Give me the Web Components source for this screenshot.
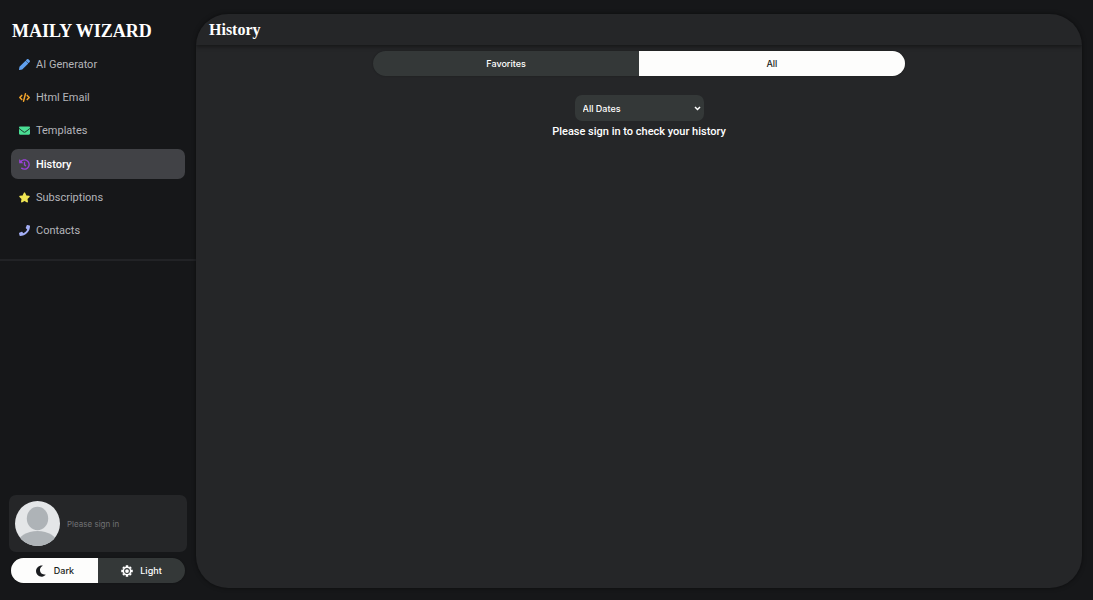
<!DOCTYPE html>
<html lang="en">
<head>
<meta charset="utf-8">
<meta name="viewport" content="width=device-width, initial-scale=1">
<title>Maily Wizard</title>
<style>
html, body { height: 100%; }
body { margin: 0; background: #161719; font-family: Inter, "Liberation Sans", sans-serif; font-size: 11px; }
</style>
</head>
<body>
<mw-app></mw-app>
<script>
const ICONS = {
  pencil: '<path d="M497.900 142.100l-46.100 46.100c-4.700 4.700-12.300 4.700-17 0l-111-111c-4.700-4.700-4.700-12.300 0-17l46.100-46.100c18.700-18.700 49.100-18.700 67.900 0l60.100 60.100c18.800 18.700 18.800 49.100 0 67.900zM306 78L21.600 362.400.4 483.900c-2.900 16.400 11.400 30.600 27.800 27.800l121.500-21.300L434 206z"/>',
  code: '<g fill="none" stroke="currentColor" stroke-width="72" stroke-linecap="round" stroke-linejoin="round"><path d="M130 160L38 256l92 96M382 160l92 96-92 96M300 85l-88 342"/></g>',
  envelope: '<path d="M502.300 190.800c3.900-3.100 9.700-.2 9.700 4.700V400c0 26.500-21.500 48-48 48H48c-26.500 0-48-21.500-48-48V195.600c0-5 5.700-7.800 9.700-4.700 22.400 17.400 52.100 39.500 154.100 113.600 21.100 15.400 56.700 47.800 92.200 47.600 35.700.3 72-32.800 92.300-47.600 102-74.100 131.600-96.300 154-113.700zM256 320c23.200.4 56.600-29.200 73.400-41.400 132.700-96.300 142.800-104.700 173.400-128.700 5.800-4.500 9.200-11.500 9.200-18.900v-19c0-26.500-21.500-48-48-48H48c-26.500 0-48 21.500-48 48v19c0 7.400 3.400 14.300 9.200 18.900 30.600 23.900 40.700 32.400 173.400 128.700 16.800 12.200 50.200 41.800 73.400 41.400z"/>',
  history: '<path d="M504 255.531c.253 136.640-111.180 248.372-247.820 248.468-59.015.042-113.223-20.530-155.822-54.911-11.077-8.940-11.905-25.541-1.839-35.607l11.267-11.267c8.609-8.609 22.353-9.551 31.891-1.984C173.062 425.135 212.781 440 256 440c101.705 0 184-82.311 184-184 0-101.705-82.311-184-184-184-48.814 0-93.149 18.969-126.068 49.932l50.754 50.754c10.080 10.080 2.941 27.314-11.313 27.314H24c-8.837 0-16-7.163-16-16V38.627c0-14.254 17.234-21.393 27.314-11.314l49.372 49.372C129.209 34.136 189.552 8 256 8c136.810 0 247.747 110.780 248 247.531zm-180.912 78.784l9.823-12.630c8.138-10.463 6.253-25.542-4.210-33.679L288 256.349V152c0-13.255-10.745-24-24-24h-16c-13.255 0-24 10.745-24 24v135.651l65.409 50.874c10.463 8.137 25.541 6.253 33.679-4.210z"/>',
  star: '<path d="M227 38L168 160 36 180c-24 4-32 33-15 49l95 93-22 132c-4 24 21 42 42 31l120-62 120 62c21 11 46-7 42-31l-22-132 95-93c17-16 9-45-15-49l-132-20L285 38c-12-22-46-22-58 0z"/>',
  phone: '<path d="M493.400 24.600l-104-24c-11.300-2.600-22.900 3.300-27.500 13.900l-48 112c-4.200 9.800-1.400 21.300 6.900 28l60.600 49.600c-36 76.700-98.900 140.500-177.200 177.200l-49.600-60.600c-6.800-8.300-18.200-11.100-28-6.900l-112 48C3.900 366.500-2 378.100.6 389.400l24 104C27.100 504.200 36.700 512 48 512c256.100 0 464-207.500 464-464 0-11.200-7.700-20.900-18.600-23.400z"/>',
  moon: '<path d="M310 18C164 8 44 118 44 258s118 246 256 238c60-4 112-30 148-68 10-12 0-28-16-26-122 22-220-60-220-184 0-78 40-136 106-172 14-8 10-26-8-28z"/>',
  sun: '<g fill="none" stroke="currentColor"><circle cx="256" cy="256" r="156" stroke-width="64"/><circle cx="256" cy="256" r="40" stroke-width="80"/><path stroke-width="104" d="M256 90V10M256 422v80M90 256H10M422 256h80M138 138L86 86M374 374l52 52M374 138l52-52M138 374l-52 52"/></g>'
};

class MwIcon extends HTMLElement {
  constructor() {
    super();
    this.attachShadow({ mode: "open" }).innerHTML = `
      <style>
        :host { display: block; width: 11px; height: 11px; flex: none; }
        svg { display: block; width: 100%; height: 100%; overflow: visible; fill: currentColor; }
      </style>
      <svg viewBox="0 0 512 512" aria-hidden="true">${ICONS[this.getAttribute("name")]}</svg>`;
  }
}
customElements.define("mw-icon", MwIcon);

class MwNavItem extends HTMLElement {
  constructor() {
    super();
    const active = this.hasAttribute("active");
    this.attachShadow({ mode: "open" }).innerHTML = `
      <style>
        :host { display: block; font-family: Roboto, "Liberation Sans", sans-serif; }
        a { display: flex; align-items: center; gap: 6px; height: 30px; padding: 0 8px;
            border-radius: 7px; color: #b4b5b9; text-decoration: none; }
        a[aria-current] { background: #414246; color: #fff; font-weight: 500; }
        mw-icon { color: ${this.getAttribute("tint")}; }
      </style>
      <a href="#"${active ? ' aria-current="page"' : ""}>
        <mw-icon name="${this.getAttribute("icon")}"></mw-icon><span><slot></slot></span>
      </a>`;
  }
}
customElements.define("mw-nav-item", MwNavItem);

class MwSegmented extends HTMLElement {
  constructor() {
    super();
    this.attachShadow({ mode: "open" }).innerHTML = `
      <style>
        :host { display: flex; height: 25px; border-radius: 13px; overflow: hidden;
                background: #343838; box-shadow: 0 0 2px rgba(0,0,0,.3); }
        ::slotted(button) { flex: 1; display: flex; align-items: center; justify-content: center; gap: 7px;
                border: 0; padding: 0; background: transparent; color: #fff;
                font: 500 9px Inter, "Liberation Sans", sans-serif; cursor: pointer; }
        ::slotted(button[aria-pressed="true"]) { background: #fdfdfc; color: #1b1d20; }
      </style>
      <slot></slot>`;
    this.addEventListener("click", (event) => {
      const picked = event.target.closest("button");
      if (!picked) return;
      for (const button of this.querySelectorAll("button"))
        button.setAttribute("aria-pressed", String(button === picked));
    });
  }
}
customElements.define("mw-segmented", MwSegmented);

class MwUserCard extends HTMLElement {
  constructor() {
    super();
    this.attachShadow({ mode: "open" }).innerHTML = `
      <style>
        :host { display: flex; align-items: center; gap: 7px; padding: 6px;
                border-radius: 7px; background: #252628; color: #707174; font-size: 8px; }
        svg { display: block; width: 45px; height: 45px; border-radius: 50%; }
      </style>
      <svg viewBox="0 0 45 45" role="img" aria-label="Avatar">
        <path fill="#e4e6e8" d="M0 0h45v45H0z"/>
        <ellipse cx="22.500" cy="17.500" rx="10.700" ry="11.700" fill="#aeb3b7"/>
        <ellipse cx="22.500" cy="43" rx="20" ry="13" fill="#aeb3b7"/>
      </svg>
      <span><slot></slot></span>`;
  }
}
customElements.define("mw-user-card", MwUserCard);

class MwSidebar extends HTMLElement {
  constructor() {
    super();
    this.attachShadow({ mode: "open" }).innerHTML = `
      <style>
        :host { display: flex; flex-direction: column; width: 196px; flex: none; box-sizing: border-box; padding: 20px 0 17px; }
        h1 { margin: 0 12px 7px; font: bold 18px/22px "Liberation Serif", serif; color: #fff; white-space: nowrap; }
        nav { display: flex; flex-direction: column; justify-content: space-between;
              height: 197px; padding: 0 11px 13px; border-bottom: 2px solid #222326; }
        footer { margin-top: auto; }
        mw-user-card { margin: 0 9px 6px; }
        mw-segmented { margin: 0 11px; }
        button mw-icon { width: 12px; height: 12px; }
      </style>
      <h1>MAILY WIZARD</h1>
      <nav aria-label="Main">
        <mw-nav-item icon="pencil" tint="#60a0ee">AI Generator</mw-nav-item>
        <mw-nav-item icon="code" tint="#f0a32b">Html Email</mw-nav-item>
        <mw-nav-item icon="envelope" tint="#4ade94">Templates</mw-nav-item>
        <mw-nav-item icon="history" tint="#9a42d8" active>History</mw-nav-item>
        <mw-nav-item icon="star" tint="#f0e653">Subscriptions</mw-nav-item>
        <mw-nav-item icon="phone" tint="#a3aef5">Contacts</mw-nav-item>
      </nav>
      <footer>
        <mw-user-card>Please sign in</mw-user-card>
        <mw-segmented role="group" aria-label="Theme">
          <button type="button" aria-pressed="true"><mw-icon name="moon"></mw-icon>Dark</button>
          <button type="button" aria-pressed="false"><mw-icon name="sun"></mw-icon>Light</button>
        </mw-segmented>
      </footer>`;
  }
}
customElements.define("mw-sidebar", MwSidebar);

class MwPanel extends HTMLElement {
  constructor() {
    super();
    this.attachShadow({ mode: "open" }).innerHTML = `
      <style>
        :host { display: block; flex: 1; min-width: 0; border-radius: 32px; overflow: hidden;
                background: #252628; box-shadow: 0 0 4px rgba(0,0,0,.5); }
        header { height: 31px; padding: 0 13px; box-shadow: 0 2px 4px rgba(0,0,0,.4); }
        h2 { margin: 0; font: bold 16px/31px "Liberation Serif", serif; color: #fff; }
      </style>
      <header><h2><slot name="title"></slot></h2></header>
      <slot></slot>`;
  }
}
customElements.define("mw-panel", MwPanel);

class MwHistory extends HTMLElement {
  constructor() {
    super();
    this.attachShadow({ mode: "open" }).innerHTML = `
      <style>
        :host { display: flex; flex-direction: column; align-items: center; padding-top: 6px; color: #fff; }
        mw-segmented { width: 60%; }
        .dates { display: grid; align-items: center; margin-top: 19px; }
        .dates > * { grid-area: 1 / 1; }
        select { appearance: none; width: 129px; height: 26px; padding: 0 8px; border: 0; border-radius: 7px;
                 background: #343838; color: #fff; font: 500 9px Inter, "Liberation Sans", sans-serif; }
        svg { justify-self: end; width: 7px; height: 5px; margin-right: 3px; pointer-events: none; }
        p { margin: 2px 0 0; font: 500 11px/18px Roboto, "Liberation Sans", sans-serif; }
      </style>
      <mw-segmented role="group" aria-label="Filter">
        <button type="button" aria-pressed="false">Favorites</button>
        <button type="button" aria-pressed="true">All</button>
      </mw-segmented>
      <div class="dates">
        <select aria-label="Dates"><option>All Dates</option></select>
        <svg viewBox="0 0 7 5" aria-hidden="true"><path d="M1 1l2.500 2.500L6 1" fill="none" stroke="#fff" stroke-width="1.500"/></svg>
      </div>
      <p>Please sign in to check your history</p>`;
  }
}
customElements.define("mw-history", MwHistory);

class MwApp extends HTMLElement {
  constructor() {
    super();
    this.attachShadow({ mode: "open" }).innerHTML = `
      <style>
        :host { display: flex; min-height: 100vh; }
        main { display: flex; flex: 1; min-width: 0; padding: 14px 11px 12px 0; }
      </style>
      <mw-sidebar></mw-sidebar>
      <main>
        <mw-panel><span slot="title">History</span><mw-history></mw-history></mw-panel>
      </main>`;
  }
}
customElements.define("mw-app", MwApp);
</script>
</body>
</html>
